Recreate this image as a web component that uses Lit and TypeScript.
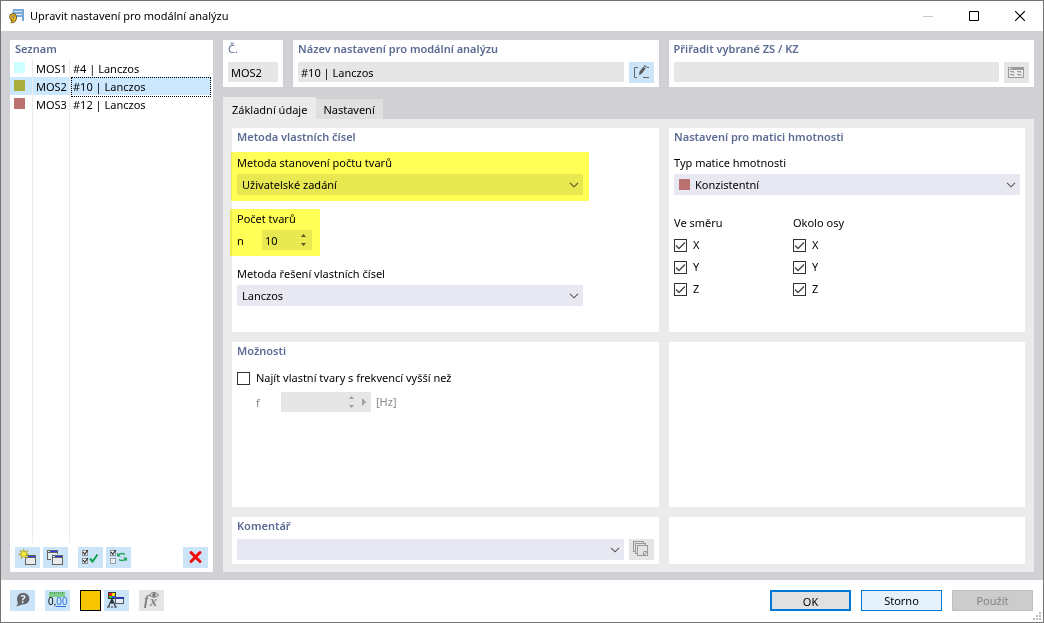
import { LitElement, html, css, svg, nothing } from "lit";
import { customElement, property, state } from "lit/decorators.js";
import { classMap } from "lit/directives/class-map.js";
import { styleMap } from "lit/directives/style-map.js";

interface Item {
  id: string;
  name: string;
  color: string;
}

const ITEMS: Item[] = [
  { id: "MOS1", name: "#4 | Lanczos", color: "#ccffff" },
  { id: "MOS2", name: "#10 | Lanczos", color: "#abae3c" },
  { id: "MOS3", name: "#12 | Lanczos", color: "#bb7170" },
];

const win = (x: number, y: number) => svg`
  <rect x=${x} y=${y} width="11" height="10" fill="#636363"/>
  <rect x=${x + 1} y=${y + 1} width="2" height="1" fill="#dfe5ee"/>
  <rect x=${x + 3} y=${y + 1} width="7" height="1" fill="#2b35f0"/>
  <rect x=${x + 1} y=${y + 3} width="9" height="6" fill="#e9eaec"/>`;

const tick = (y: number) => svg`
  <rect x="4.5" y=${y + 0.5} width="5" height="5" fill="#f4f7fa" stroke="#8b8f93"/>
  <path d=${`M5 ${y + 2} l1.800 2.300 l3 -4.300`} fill="none" stroke="#222" stroke-width="1.100"/>`;

const ICONS: Record<string, unknown> = {
  add: svg`${win(10, 8)}
    <path d="M8.500 2l1.200 3 3.300-1.500-1.700 3 2.700 1-3.300 1 .8 3-2.800-1.900-2.700 2 .6-3.200-3.300-.9 3.200-1-1.400-3 2.900 1.500z" fill="#f4e83c" stroke="#a3962a" stroke-width=".7"/>`,
  copy: svg`${win(4, 3)}<rect x="8" y="7" width="13" height="12" fill="#cce4f7"/>${win(9, 8)}`,
  checkAll: svg`${tick(3)}${tick(11)}
    <path d="M12 11.500l2.500 3 5-7" fill="none" stroke="#17a34b" stroke-width="2"/>`,
  checkSwap: svg`${tick(3)}
    <rect x="4.500" y="11.500" width="5" height="5" fill="#e6eef6" stroke="#9aa0a6"/>
    <path d="M12.500 8c1.500-2 4.500-2 6.500-.5M19.500 12c-1.500 2-4.500 2-6.500 .5" fill="none" stroke="#27a35a" stroke-width="1.500"/>
    <path d="M11 5.500v4h4zM21 14.500v-4h-4z" fill="#27a35a"/>`,
  remove: svg`<path d="M8 5.500l9 9M17 5.500l-9 9" stroke="#f50a0a" stroke-width="3" stroke-linecap="round"/>`,
  help: svg`<path d="M13 3c4 0 6.300 2.500 6.300 5.800s-2.600 5.700-6.300 5.700c-1.500 0-2 .3-3.300 1l-3.400 1 1.700-3.200C5.500 8 8 3 13 3z" fill="#62666a"/>
    <text x="13" y="12.500" text-anchor="middle" class="q">?</text>`,
  units: svg`<rect x="4" y="2" width="16" height="5" fill="#7fcf8b"/>
    <path d="M5.500 2v2M7.500 2v1M9.500 2v2M11.500 2v1M13.500 2v2M15.500 2v1M17.500 2v2" stroke="#4f9f63"/>
    <text x="3" y="15" class="num">0,<tspan fill="#2f6fe0">00</tspan></text>
    <path d="M11 16.500h10" stroke="#2f6fe0"/>`,
  camera: svg`<rect x="4" y="2" width="8" height="7" fill="#303338"/>
    <rect x="5" y="3" width="3" height="3" fill="#f22"/><rect x="8" y="3" width="3" height="3" fill="#ffe000"/>
    <rect x="5" y="6" width="3" height="2" fill="#1fc52e"/><rect x="8" y="6" width="3" height="2" fill="#2a52ff"/>
    <path d="M8 9v5M8 9l-3.500 7.500M8 9l3.500 7.500M6 12.500h4" stroke="#2c2f33" stroke-width="1.200" fill="none"/>
    <path d="M3 17h3M7 17h2M10 17h3" stroke="#2c2f33"/>
    <rect x="11" y="7" width="9" height="7" fill="#555b6e"/><rect x="12" y="7" width="8" height="2" fill="#2b35a8"/><rect x="12" y="9" width="7" height="4" fill="#e9eef5"/>`,
  fx: svg`<text x="5" y="15" class="fx">f</text><text x="11" y="16" class="fx">x</text>
    <path d="M10.500 5q4.500-5 9 0q-4.500 4.500-9 0z" fill="none" stroke="#6f6f6f"/><circle cx="15" cy="5" r="1.700" fill="#6f6f6f"/>`,
  edit: svg`<path d="M9 5.500H5.500v10H8M14 15.500h6M18 5.500h2" fill="none" stroke="#666"/>
    <path d="M10.500 9.800l3.700-5 2.500 1.700-3.800 5.100-2.900 1.700z" fill="#5c5c5c"/><path d="M14.700 4l.8-1 2.300 1.700-.7 1z" fill="#5c5c5c"/>`,
  form: svg`<rect x="4" y="5" width="16" height="11" fill="#9a9a9a"/>
    <rect x="5" y="6" width="2" height="1" fill="#fff"/><rect x="5" y="8" width="14" height="7" fill="#efefef"/>
    <path d="M6 9.500h4M13 9.500h4M6 12.500h4M13 12.500h4" stroke="#9a9a9a"/><path d="M7 10.500h4M14 10.500h4M7 13.500h4M14 13.500h4" stroke="#ccc"/>`,
  sheets: svg`<g fill="#e4e4e4" stroke="#9a9a9a"><rect x="4.500" y="2.500" width="10" height="10"/><rect x="6.500" y="4.500" width="10" height="10"/>
    <rect x="8.500" y="6.500" width="10" height="10"/><path d="M14.500 16.500v-4h4"/></g><path d="M15 16l3-3" stroke="#9a9a9a"/>`,
};

const base = css`
  *,
  *::before,
  *::after {
    box-sizing: border-box;
  }
  button,
  input,
  select {
    font: inherit;
    color: inherit;
    margin: 0;
    padding: 0;
    border: 0;
    border-radius: 0;
    outline: 0;
    background: none;
  }
`;

@customElement("tool-button")
export class ToolButton extends LitElement {
  @property() icon = "";
  @property() label = "";
  @property({ type: Boolean }) disabled = false;

  static styles = [
    base,
    css`
      :host {
        display: block;
        flex: none;
      }
      .btn {
        display: block;
        width: 25px;
        height: 21px;
        background: #cce4f7;
      }
      .btn:disabled {
        background: #e5e5e5;
      }
      .glyph {
        display: block;
      }
      .q {
        font: bold 11px "Open Sans", sans-serif;
        fill: #e4eef6;
      }
      .num {
        font: 10px "Liberation Sans", sans-serif;
      }
      .fx {
        font: italic bold 14px "Liberation Serif", serif;
        fill: #808080;
      }
    `,
  ];

  render() {
    return html`<button class="btn" aria-label=${this.label} ?disabled=${this.disabled}>
      <svg class="glyph" width="25" height="21" viewBox="0 0 25 21">${ICONS[this.icon]}</svg>
    </button>`;
  }
}

@customElement("combo-box")
export class ComboBox extends LitElement {
  @property() label = "";
  @property() value = "";
  @property() swatch = "";
  @property({ type: Boolean }) bare = false;

  static styles = [
    base,
    css`
      :host {
        display: block;
        min-width: 0;
      }
      .label {
        display: block;
        line-height: 22px;
      }
      .box {
        display: grid;
        align-items: center;
        height: 21px;
        background: #e8e8f2;
      }
      .box > * {
        grid-area: 1 / 1;
      }
      .select {
        appearance: none;
        width: 100%;
        height: 21px;
        padding: 0 24px 0 5px;
      }
      .inset {
        padding-left: 21px;
      }
      .swatch {
        width: 11px;
        height: 11px;
        margin-left: 5px;
      }
      .arrow {
        justify-self: end;
        margin-right: 4px;
        pointer-events: none;
      }
    `,
  ];

  render() {
    return html`
      ${this.bare ? nothing : html`<label class="label" for="s">${this.label}</label>`}
      <div class="box">
        <select id="s" class=${classMap({ select: true, inset: !!this.swatch })} aria-label=${this.label}>
          <option>${this.value}</option>
        </select>
        ${this.swatch
          ? html`<span class="swatch" style=${styleMap({ background: this.swatch })}></span>`
          : nothing}
        <svg class="arrow" width="10" height="6" viewBox="0 0 10 6">
          <path d="M1 .8l4 4 4-4" fill="none" stroke="#555" stroke-width="1.100" />
        </svg>
      </div>
    `;
  }
}

@customElement("app-root")
export class AppRoot extends LitElement {
  @state() private selected = "MOS2";
  @state() private tab = 0;

  static styles = [
    base,
    css`
      :host {
        display: flex;
        flex-direction: column;
        box-sizing: border-box;
        min-height: 100vh;
        border: 1px solid #747474;
        background: #fff;
        color: #000;
        font: 11px/18px "Noto Sans", "Open Sans", sans-serif;
      }
      .titlebar {
        display: flex;
        align-items: center;
        height: 30px;
        padding-left: 8px;
      }
      .caption {
        flex: 1;
        margin: 0;
        padding-left: 5px;
        font-size: 11px;
        font-weight: 400;
      }
      .winbtn {
        display: grid;
        place-items: center;
        width: 46px;
        height: 30px;
      }
      .body {
        flex: 1;
        display: flex;
        gap: 10px;
        padding: 9px 9px 8px;
        background: #d1d0d5;
      }
      .panel {
        min-width: 0;
        padding: 0 5px;
        background: #fff;
      }
      .heading {
        margin: 0;
        font-size: 11px;
        line-height: 18px;
        font-weight: 600;
        color: #5b6b93;
      }
      .light {
        font-weight: 400;
      }
      .sidebar {
        display: flex;
        flex-direction: column;
        flex: none;
        width: 203px;
        background: #fff;
      }
      .sidebar .heading {
        padding: 0 5px 1px;
      }
      .list {
        flex: 1;
        display: grid;
        grid-template-columns: 22px 36px 1fr;
        grid-template-rows: repeat(3, 18px) 1fr;
        column-gap: 1px;
        margin: 0 2px 4px 0;
        padding: 0;
        list-style: none;
      }
      .row {
        display: grid;
        grid-column: 1 / -1;
        grid-template-columns: subgrid;
        align-items: center;
      }
      .row > *,
      .filler > * {
        box-shadow: 1px 0 #ebebeb;
        height: 100%;
      }
      .row > :last-child,
      .filler > :last-child {
        box-shadow: none;
      }
      .filler {
        display: grid;
        grid-column: 1 / -1;
        grid-template-columns: subgrid;
      }
      .active {
        background: #cce8ff;
      }
      .mark {
        padding: 3px 0 0 4px;
      }
      .chip {
        display: block;
        width: 11px;
        height: 11px;
      }
      .code {
        padding: 1px 0 0 3px;
      }
      .name {
        margin-left: 1px;
        padding-left: 2px;
        line-height: 20px;
      }
      .active .name {
        outline: 1px dotted #000;
        outline-offset: -1px;
      }
      .tools {
        display: flex;
        gap: 3px;
        padding: 0 5px 4px;
      }
      .apart {
        margin-left: 7px;
      }
      .end {
        margin-left: auto;
      }
      .main {
        flex: 1;
        display: flex;
        flex-direction: column;
        min-width: 0;
      }
      .top {
        display: grid;
        grid-template-columns: 60px 1fr 1fr;
        gap: 10px;
        margin-bottom: 10px;
      }
      .top .panel {
        height: 47px;
      }
      .line {
        display: flex;
        gap: 5px;
        margin-top: 4px;
      }
      .field {
        flex: 1;
        width: 100%;
        min-width: 0;
        height: 20px;
        padding: 1px 3px 0;
        background: #e6e6e6;
      }
      .tabs {
        display: flex;
        align-items: flex-end;
        height: 22px;
      }
      .tab {
        height: 20px;
        padding: 1px 8px 0 7px;
        background: #dfdfdf;
        white-space: nowrap;
      }
      .on {
        height: 22px;
        padding: 3px 9px 0;
        background: #ebebeb;
      }
      .page {
        flex: 1;
        display: grid;
        grid-template-columns: minmax(0, 427fr) minmax(0, 356fr);
        grid-template-rows: 204px minmax(165px, 1fr) 47px;
        gap: 10px;
        padding: 9px 9px 8px;
        background: #ebebeb;
      }
      .method {
        margin: 6px 71px 0 0;
      }
      .note {
        position: relative;
      }
      .note::after {
        content: "";
        position: absolute;
        inset: 0 -6px -6px;
        background: #ffff55;
        mix-blend-mode: multiply;
        pointer-events: none;
      }
      .count {
        width: 75px;
        margin-top: 14px;
      }
      .count::after {
        inset: 0 -8px -6px -7px;
      }
      .solver {
        margin-top: 13px;
      }
      .caption-line {
        display: block;
        line-height: 20px;
      }
      .entry {
        display: flex;
        align-items: center;
        height: 20px;
        margin-top: 1px;
      }
      .symbol {
        width: 25px;
        padding-top: 1px;
      }
      .spin {
        display: flex;
        align-items: center;
        width: 50px;
        height: 20px;
        background: #e8e8f2;
      }
      .number {
        flex: 1;
        min-width: 0;
        padding: 1px 0 0 3px;
        appearance: textfield;
      }
      .number::-webkit-inner-spin-button {
        display: none;
      }
      .steps {
        display: grid;
        width: 17px;
        padding-right: 1px;
      }
      .step {
        display: grid;
        place-items: center;
        height: 9px;
      }
      .off {
        color: #8a8a8a;
      }
      .off .spin {
        width: 90px;
        background: #e6e6e6;
      }
      .matrix {
        margin-top: 6px;
      }
      .axes {
        display: grid;
        grid-template-columns: 119px 119px;
        margin-top: 17px;
      }
      .group {
        margin: 0;
        padding: 0;
        border: 0;
      }
      .legend {
        padding: 0;
        line-height: 22px;
      }
      .check {
        display: flex;
        align-items: center;
        gap: 6px;
        height: 22px;
      }
      .tick {
        flex: none;
        appearance: none;
        width: 13px;
        height: 13px;
        border: 1px solid #333;
        background: #fff;
      }
      .tick:checked {
        background: #fff
          url("data:image/svg+xml,%3Csvg xmlns='http://www.w3.org/2000/svg' viewBox='0 0 11 11'%3E%3Cpath d='M1 5.500l3 3L10 2.500' fill='none' stroke='%23444' stroke-width='1.300'/%3E%3C/svg%3E");
      }
      .option {
        margin-top: 7px;
      }
      .limit {
        margin: 3px 0 0 19px;
      }
      .unit {
        margin-left: 5px;
      }
      .stretch {
        flex: 1;
      }
      .footer {
        display: flex;
        align-items: center;
        gap: 10px;
        height: 42px;
        padding: 0 10px 2px 9px;
      }
      .pair {
        display: flex;
        gap: 3px;
      }
      .color {
        width: 21px;
        height: 21px;
        border: 1px solid #000;
        background: #f7c500;
      }
      .action {
        width: 81px;
        height: 21px;
        padding-top: 1px;
        border: 1px solid #0078d7;
        background: #e5f1fb;
      }
      .ok {
        border-width: 2px;
        background: #e1e1e1;
      }
      .action:disabled {
        border-color: #bfbfbf;
        background: #ccc;
        color: #838383;
      }
      .grip {
        position: absolute;
        right: 3px;
        bottom: 3px;
      }
    `,
  ];

  private arrows(color: string) {
    return html`<span class="steps">
      <button class="step" aria-label="Zvýšit" ?disabled=${color !== "#555"}>
        <svg width="5" height="3"><path d="M0 3L2.500 0 5 3z" fill=${color} /></svg>
      </button>
      <button class="step" aria-label="Snížit" ?disabled=${color !== "#555"}>
        <svg width="5" height="3"><path d="M0 0L2.500 3 5 0z" fill=${color} /></svg>
      </button>
    </span>`;
  }

  private axes(title: string) {
    return html`<fieldset class="group">
      <legend class="legend">${title}</legend>
      ${["X", "Y", "Z"].map(
        (a) => html`<label class="check"><input class="tick" type="checkbox" checked />${a}</label>`,
      )}
    </fieldset>`;
  }

  render() {
    return html`
      <header class="titlebar">
        <svg width="16" height="16" viewBox="0 0 16 16">
          <path d="M4 1h11v12h-2V9H7V8H3z" fill="#78a9d6" />
          <path d="M5 3h8v1H5zM6 6h7v1H6z" fill="#dcebf7" />
          <circle cx="4" cy="9" r="2.300" fill="none" stroke="#5f4d10" stroke-width="3" />
          <path d="M6.300 9c0 3-1 4.800-4.500 4.800" fill="none" stroke="#5f4d10" stroke-width="3" />
          <circle cx="4" cy="9" r="2.200" fill="none" stroke="#e5b928" stroke-width="1.600" />
          <path d="M6.200 9c0 3-1 4.700-4 4.700" fill="none" stroke="#e5b928" stroke-width="1.600" />
        </svg>
        <h1 class="caption">Upravit nastavení pro modální analýzu</h1>
        <button class="winbtn" aria-label="Minimalizovat" disabled>
          <svg width="10" height="10"><path d="M0 5.500h10" stroke="#c8c8c8" /></svg>
        </button>
        <button class="winbtn" aria-label="Maximalizovat">
          <svg width="10" height="10"><path d="M.5.5h9v9h-9z" fill="none" stroke="#000" /></svg>
        </button>
        <button class="winbtn" aria-label="Zavřít">
          <svg width="10" height="10"><path d="M0 0l10 10M10 0L0 10" stroke="#000" stroke-width="1.200" /></svg>
        </button>
      </header>

      <main class="body">
        <aside class="sidebar">
          <h2 class="heading">Seznam</h2>
          <ul class="list" role="listbox" aria-label="Seznam">
            ${ITEMS.map(
              (i) => html`<li
                class=${classMap({ row: true, active: i.id === this.selected })}
                role="option"
                aria-selected=${i.id === this.selected}
                @click=${() => (this.selected = i.id)}
              >
                <span class="mark"><span class="chip" style=${styleMap({ background: i.color })}></span></span>
                <span class="code">${i.id}</span>
                <span class="name">${i.name}</span>
              </li>`,
            )}
            <li class="filler" role="presentation"><span></span><span></span><span></span></li>
          </ul>
          <div class="tools">
            <tool-button icon="add" label="Nový"></tool-button>
            <tool-button icon="copy" label="Kopírovat"></tool-button>
            <tool-button class="apart" icon="checkAll" label="Vybrat vše"></tool-button>
            <tool-button icon="checkSwap" label="Obrátit výběr"></tool-button>
            <tool-button class="end" icon="remove" label="Smazat"></tool-button>
          </div>
        </aside>

        <div class="main">
          <div class="top">
            <section class="panel">
              <h2 class="heading light"><label for="code">Č.</label></h2>
              <div class="line"><input id="code" class="field" value="MOS2" readonly /></div>
            </section>
            <section class="panel">
              <h2 class="heading"><label for="name">Název nastavení pro modální analýzu</label></h2>
              <div class="line">
                <input id="name" class="field" value="#10 | Lanczos" />
                <tool-button icon="edit" label="Upravit název"></tool-button>
              </div>
            </section>
            <section class="panel">
              <h2 class="heading"><label for="assign">Přiřadit vybrané ZS / KZ</label></h2>
              <div class="line">
                <input id="assign" class="field" disabled />
                <tool-button icon="form" label="Vybrat" disabled></tool-button>
              </div>
            </section>
          </div>

          <nav class="tabs" role="tablist">
            ${["Základní údaje", "Nastavení"].map(
              (t, i) => html`<button
                class=${classMap({ tab: true, on: i === this.tab })}
                role="tab"
                aria-selected=${i === this.tab}
                @click=${() => (this.tab = i)}
              >
                ${t}
              </button>`,
            )}
          </nav>

          <div class="page">
            <section class="panel">
              <h2 class="heading">Metoda vlastních čísel</h2>
              <combo-box class="method note" label="Metoda stanovení počtu tvarů" value="Uživatelské zadání"></combo-box>
              <div class="count note">
                <label class="caption-line" for="n">Počet tvarů</label>
                <div class="entry">
                  <span class="symbol">n</span>
                  <span class="spin"><input id="n" class="number" type="number" value="10" />${this.arrows("#555")}</span>
                </div>
              </div>
              <combo-box class="method solver" label="Metoda řešení vlastních čísel" value="Lanczos"></combo-box>
            </section>

            <section class="panel">
              <h2 class="heading">Nastavení pro matici hmotnosti</h2>
              <combo-box class="matrix" label="Typ matice hmotnosti" value="Konzistentní" swatch="#bb7170"></combo-box>
              <div class="axes">${this.axes("Ve směru")}${this.axes("Okolo osy")}</div>
            </section>

            <section class="panel">
              <h2 class="heading">Možnosti</h2>
              <label class="check option"><input class="tick" type="checkbox" />Najít vlastní tvary s frekvencí vyšší než</label>
              <div class="entry limit off">
                <label class="symbol" for="f">f</label>
                <span class="spin">
                  <input id="f" class="number" disabled />${this.arrows("#a0a0a0")}
                  <svg width="11" height="8"><path d="M2 0l4 4-4 4z" fill="#a0a0a0" /></svg>
                </span>
                <span class="unit">[Hz]</span>
              </div>
            </section>

            <section class="panel"></section>

            <section class="panel">
              <h2 class="heading">Komentář</h2>
              <div class="line">
                <combo-box class="stretch" bare label="Komentář"></combo-box>
                <tool-button icon="sheets" label="Převzít komentář" disabled></tool-button>
              </div>
            </section>

            <section class="panel"></section>
          </div>
        </div>
      </main>

      <footer class="footer">
        <tool-button icon="help" label="Nápověda"></tool-button>
        <tool-button icon="units" label="Jednotky"></tool-button>
        <div class="pair">
          <button class="color" aria-label="Barva"></button>
          <tool-button icon="camera" label="Zobrazení"></tool-button>
        </div>
        <tool-button icon="fx" label="Vzorec" disabled></tool-button>
        <button class="action ok end">OK</button>
        <button class="action">Storno</button>
        <button class="action" disabled>Použít</button>
        <svg class="grip" width="8" height="8" fill="#bdbdbd">
          <path d="M6 0h2v2H6zM3 3h2v2H3zM6 3h2v2H6zM0 6h2v2H0zM3 6h2v2H3zM6 6h2v2H6z" />
        </svg>
      </footer>
    `;
  }
}
